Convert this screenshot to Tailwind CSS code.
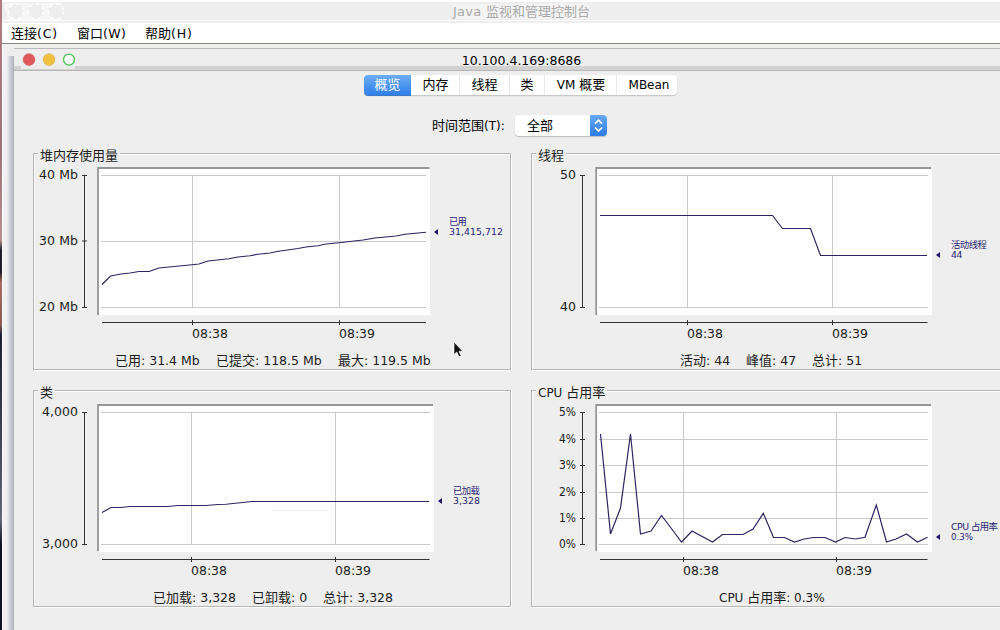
<!DOCTYPE html>
<html lang="zh-CN">
<head>
<meta charset="utf-8">
<title>Java 监视和管理控制台</title>
<script src="https://cdn.jsdelivr.net/npm/@tailwindcss/browser@4"></script>
</head>
<body class="w-[1000px] h-[630px] overflow-hidden bg-[#eeeeee] text-[#1c1c1c] font-['DejaVu_Sans','Noto_Sans_CJK_SC',sans-serif] text-[12.5px] leading-none">
<div class="flex w-[1000px] h-[630px]">
  <!-- desktop edge -->
  <div class="w-[2px] shrink-0 bg-[linear-gradient(#b07c80_0px,#9c7477_150px,#b89090_240px,#20202c_250px,#1c1c28_272px,#a86b60_282px,#8d5750_325px,#1c2036_335px,#30354c_400px,#62667a_520px,#0c1024_545px,#10142c_630px)]"></div>
  <div class="w-[998px] flex flex-col shrink-0">
    <!-- window title bar -->
    <div class="h-[23px] shrink-0 bg-[#eeeeee] border-t-2 border-white flex relative">
      <svg class="w-[70px] h-[20px] shrink-0" viewBox="2 2 70 20">
        <path d="M5 3H62V20H7V12H5Z" fill="#f6f6f6"/>
        <g fill="#ededed" stroke="#fff" stroke-width="1.5" stroke-dasharray="3 4"><circle cx="16" cy="11.5" r="7.500"/><circle cx="36" cy="11.5" r="7.500"/><circle cx="56" cy="11.5" r="7.500"/></g>
      </svg>
      <div class="w-[899px] text-center text-[#a9a9a9] text-[13px] leading-[20px]"><span class="bg-[#f4f4f4] text-[13px] tracking-[0.3px]">Java </span><span class="bg-[#f4f4f4]">监视和管理控制台</span></div>
      <div class="absolute left-0 right-0 top-[18px] h-px bg-white"></div>
    </div>
    <!-- menu bar -->
    <div class="h-[21px] shrink-0 bg-white border-b border-[#868686] flex pl-[9px] gap-[18px] leading-[21px] text-black">
      <span class="w-[48px] whitespace-nowrap"><span class="text-[13px]">连接</span><span class="tracking-[0.8px]">(C)</span></span>
      <span class="w-[50px] whitespace-nowrap"><span class="text-[13px]">窗口</span><span class="tracking-[0.4px]">(W)</span></span>
      <span class="w-[48px] whitespace-nowrap"><span class="text-[13px]">帮助</span><span class="tracking-[0.8px]">(H)</span></span>
    </div>
    <div class="flex grow">
      <div class="w-[5px] bg-[#f0f0f0] border-l border-white"></div>
      <div class="w-[7px] mt-[12px] bg-[linear-gradient(90deg,#ececee,#d0d2da_40%,#bcbec6_80%,#adb0b6)]"></div>
      <div class="w-[986px] flex flex-col">
        <div class="h-[4px] bg-[#f0f0ee]"></div>
        <!-- connection frame title -->
        <div class="h-[23px] border-t border-b border-t-[#b9b9bf] border-b-[#b6b6b6] bg-[linear-gradient(#eeeeee_17px,#d2d2d2_17px)] flex">
          <svg class="w-[80px] h-[21px] shrink-0" viewBox="14 49 80 21">
            <path d="M21 66h54v3h-54z" fill="#ebebeb"/>
            <circle cx="29" cy="59.6" r="5.9" fill="#e0575b" stroke="#cd5a5c" stroke-width=".6"/>
            <circle cx="49" cy="59.6" r="5.9" fill="#f1c140" stroke="#d3ac50" stroke-width=".6"/>
            <circle cx="69" cy="59.6" r="5.5" fill="#f6faf6" stroke="#4fc554" stroke-width="1.3"/>
          </svg>
          <div class="w-[855px] text-center text-black leading-[23px]">10.100.4.169:8686</div>
        </div>
        <!-- tabs -->
        <div class="mt-[4px] ml-[350px] flex h-[20px] w-[313px] leading-[20px] text-center rounded-[4px] bg-white shadow-[0_1px_1px_#c4c4c4] text-black text-[13px]">
          <div class="w-[47px] rounded-l-[4px] bg-[linear-gradient(#6baef6,#2f7fe9)] text-white shadow-[0_1px_0_#3a78c8]">概览</div>
          <div class="w-[49px] border-r border-[#e8e8e8] pl-px">内存</div>
          <div class="w-[50px] border-r border-[#e8e8e8]">线程</div>
          <div class="w-[35px] border-r border-[#e8e8e8]">类</div>
          <div class="w-[72px] border-r border-[#e8e8e8] pl-px whitespace-nowrap"><span class="text-[12px]">VM </span>概要</div>
          <div class="w-[60px] text-[12px] pl-[4px]">MBean</div>
        </div>
        <!-- time range -->
        <div class="mt-[20px] ml-[418px] flex h-[20px] leading-[22px] text-black">
          <div class="w-[83px] whitespace-nowrap"><span class="text-[13px]">时间范围</span><span class="text-[12px]">(T):</span></div>
          <div class="flex w-[92px] h-[21px] bg-white rounded-[4px] shadow-[0_1px_1px_#bbbbbb] overflow-hidden">
            <div class="w-[75px] pl-[12px] text-[13px] leading-[21px]">全部</div>
            <svg class="w-[17px] h-[21px] bg-[linear-gradient(#6aabf5,#2a7ae6)]" viewBox="0 0 16 20"><path d="M4.700 8.200L8 4.900L11.300 8.200M4.700 11.900L8 15.200L11.300 11.900" fill="none" stroke="#fff" stroke-width="1.6"/></svg>
          </div>
        </div>
        <!-- charts -->
        <div class="mt-[18px] ml-[19px] grid grid-cols-[478px_478px] gap-x-[20px] gap-y-[20px] w-[977px]">
          <section class="relative h-[217px] border border-[#b6b6b6] shadow-[1px_1px_0_#fff,inset_1px_1px_0_#fafafa]">
            <h2 class="absolute -top-[5px] left-[4px] px-[2px] bg-[#eeeeee] text-[13px] leading-[14px]">堆内存使用量</h2>
            <svg class="block w-[476px] h-[196px]" viewBox="34 154 476 196">
              <path d="M99 169H430V315H99Z" fill="#fff"/><path d="M98 315V168H429.500" fill="none" stroke="#969696" stroke-width="1.8"/>
              <path d="M101 175.500H426M101 241.500H426M101 307.500H426M192.500 175V307M339.500 175V307" stroke="#c9c9c9"/>
              <path d="M84.500 175V308M82 175.500h5M82 241h5M82 307.500h5M102 322.500H426M192.500 320v5M339.500 320v5" stroke="#333" fill="none"/>
              <path d="M102 284.500L110.500 276L121 274L130 273L139 271.500H149L159 268L192 264.800L199 264L208 261L229 258.800L238 257L250 255.700L258 254.200L270 253L277 251.500L298 248.500L306 247L318 245.700L326 244L339 242.700L363 240L375 238L396 236L405 234.300L426 232.200" fill="none" stroke="#2c245e" stroke-width="1.15"/>
              <g fill="#1c1c1c" font-size="12.5"><text x="39" y="179" textLength="39">40 Mb</text><text x="39" y="245" textLength="39">30 Mb</text><text x="39" y="311" textLength="39">20 Mb</text><text x="192" y="338" textLength="36">08:38</text><text x="339" y="338" textLength="36">08:39</text></g>
              <path d="M438 229v6l-4-3z" fill="#1c1464"/>
              <g fill="#2b1f76" font-size="9.4"><text x="449" y="225" textLength="18">已用</text><text x="449" y="235" textLength="54">31,415,712</text></g>
            </svg>
            <div class="flex gap-[16px] pl-[81px] leading-[21px] whitespace-nowrap"><span class="w-[85px]"><span class="text-[13px]">已用</span>: 31.4 Mb</span><span class="w-[106px]"><span class="text-[13px]">已提交</span>: 118.5 Mb</span><span><span class="text-[13px]">最大</span>: 119.5 Mb</span></div>
          </section>
          <section class="relative h-[217px] border border-[#b6b6b6] shadow-[1px_1px_0_#fff,inset_1px_1px_0_#fafafa]">
            <h2 class="absolute -top-[5px] left-[4px] px-[2px] bg-[#eeeeee] text-[13px] leading-[14px]">线程</h2>
            <svg class="block w-[476px] h-[196px]" viewBox="532 154 476 196">
              <path d="M597 169H932V315H597Z" fill="#fff"/><path d="M596.200 315V168H931" fill="none" stroke="#969696" stroke-width="1.8"/>
              <path d="M599 175.500H928M599 307.500H928M687.500 175V307M832.500 175V307" stroke="#c9c9c9"/>
              <path d="M582.500 175V308M580 175.500h5M580 307.500h5M600 322.500H927.500M687.500 320v5M832.500 320v5" stroke="#333" fill="none"/>
              <path d="M600 215.500H772.500L782.500 228.500H810.500L820.500 255.500H927" fill="none" stroke="#2c245e" stroke-width="1.15"/>
              <g fill="#1c1c1c" font-size="12.5"><text x="560" y="179" textLength="16">50</text><text x="560" y="311" textLength="16">40</text><text x="687" y="338" textLength="36">08:38</text><text x="832" y="338" textLength="36">08:39</text></g>
              <path d="M940 252v6l-4-3z" fill="#1c1464"/>
              <g fill="#2b1f76" font-size="9.4"><text x="951" y="248" textLength="36">活动线程</text><text x="951" y="258" textLength="11.500">44</text></g>
            </svg>
            <div class="flex gap-[16px] pl-[148px] leading-[21px] whitespace-nowrap"><span class="w-[50px]"><span class="text-[13px]">活动</span>: 44</span><span class="w-[50px]"><span class="text-[13px]">峰值</span>: 47</span><span><span class="text-[13px]">总计</span>: 51</span></div>
          </section>
          <section class="relative h-[217px] border border-[#b6b6b6] shadow-[1px_1px_0_#fff,inset_1px_1px_0_#fafafa]">
            <h2 class="absolute -top-[5px] left-[4px] px-[2px] bg-[#eeeeee] text-[13px] leading-[14px]">类</h2>
            <svg class="block w-[476px] h-[196px]" viewBox="34 391 476 196">
              <path d="M99 406H434V552H99Z" fill="#fff"/><path d="M98 551V405H433" fill="none" stroke="#969696" stroke-width="1.8"/>
              <path d="M101 412.500H430M101 544.500H430M191.500 412V544M335.500 412V544" stroke="#c9c9c9"/><path d="M272 510.500H328" stroke="#eee"/>
              <path d="M84.500 412V545M82 412.500h5M82 544.500h5M102 559.500H429.500M191.500 557v5M335.500 557v5" stroke="#333" fill="none"/>
              <path d="M102 512.500L111 507.500H121L130 506.500H168L178 505.500H206L218 504.500L226 504.200L252 501.500H429" fill="none" stroke="#2c245e" stroke-width="1.15"/>
              <g fill="#1c1c1c" font-size="12.5"><text x="42" y="416" textLength="36">4,000</text><text x="42" y="548" textLength="36">3,000</text><text x="191" y="575" textLength="36">08:38</text><text x="335" y="575" textLength="36">08:39</text></g>
              <path d="M442 498v6l-4-3z" fill="#1c1464"/>
              <g fill="#2b1f76" font-size="9.4"><text x="453" y="494" textLength="27">已加载</text><text x="453" y="504" textLength="27">3,328</text></g>
            </svg>
            <div class="flex gap-[16px] pl-[119px] leading-[21px] whitespace-nowrap"><span class="w-[83px]"><span class="text-[13px]">已加载</span>: 3,328</span><span class="w-[55px]"><span class="text-[13px]">已卸载</span>: 0</span><span><span class="text-[13px]">总计</span>: 3,328</span></div>
          </section>
          <section class="relative h-[217px] border border-[#b6b6b6] shadow-[1px_1px_0_#fff,inset_1px_1px_0_#fafafa]">
            <h2 class="absolute -top-[5px] left-[4px] px-[2px] bg-[#eeeeee] text-[13px] leading-[14px]"><span class="text-[12px]">CPU </span>占用率</h2>
            <svg class="block w-[476px] h-[196px]" viewBox="532 391 476 196">
              <path d="M597 406H932V552H597Z" fill="#fff"/><path d="M596.200 551V405H931" fill="none" stroke="#969696" stroke-width="1.8"/>
              <path d="M599 412.500H928M599 439.500H928M599 465.500H928M599 492.500H928M599 518.500H928M599 544.500H928M683.500 412V544M836.500 412V544" stroke="#c9c9c9"/>
              <path d="M582.500 412V545M580 412.500h5M580 439.500h5M580 465.500h5M580 492.500h5M580 518.500h5M580 544.500h5M600 559.500H927.500M683.500 557v5M836.500 557v5" stroke="#333" fill="none"/>
              <path d="M600.500 434L610.500 534L620.500 508L630.500 434L640.500 534L651 531L661.500 515.500L671 528L681.500 542L692 531L712.500 542L722.500 534.500H743L753 529L763.300 513.300L773.500 537.500H784.500L794.500 542L804 539L814 537.500H825L835.500 542L845 537.500L855.500 539L865 537.300L876.300 505L886.500 542L896 539L906.500 534L917.500 542L927.500 537.300" fill="none" stroke="#2c245e" stroke-width="1.2"/>
              <g fill="#1c1c1c" font-size="12.5"><text x="559" y="416" textLength="17" lengthAdjust="spacingAndGlyphs">5%</text><text x="559" y="443" textLength="17" lengthAdjust="spacingAndGlyphs">4%</text><text x="559" y="469" textLength="17" lengthAdjust="spacingAndGlyphs">3%</text><text x="559" y="496" textLength="17" lengthAdjust="spacingAndGlyphs">2%</text><text x="559" y="522" textLength="17" lengthAdjust="spacingAndGlyphs">1%</text><text x="559" y="548" textLength="17" lengthAdjust="spacingAndGlyphs">0%</text><text x="683" y="575" textLength="36">08:38</text><text x="836" y="575" textLength="36">08:39</text></g>
              <path d="M940 534v6l-4-3z" fill="#1c1464"/>
              <g fill="#2b1f76" font-size="9.4"><text x="951" y="530" textLength="47">CPU 占用率</text><text x="951" y="540" textLength="22" lengthAdjust="spacingAndGlyphs">0.3%</text></g>
            </svg>
            <div class="pl-[187px] leading-[21px] whitespace-nowrap"><span class="text-[12px]">CPU </span><span class="text-[13px]">占用率</span><span class="text-[12px]">: 0.3%</span></div>
          </section>
        </div>
      </div>
    </div>
  </div>
</div>
<!-- mouse pointer -->
<svg class="absolute left-[452px] top-[340px] w-[14px] h-[20px]" viewBox="0 0 14 20"><path d="M2 2V14.500L4.800 12L7 16.800L9 15.800L7 11.300H10.700Z" fill="#111" stroke="#fff" stroke-width=".6"/></svg>
</body>
</html>
